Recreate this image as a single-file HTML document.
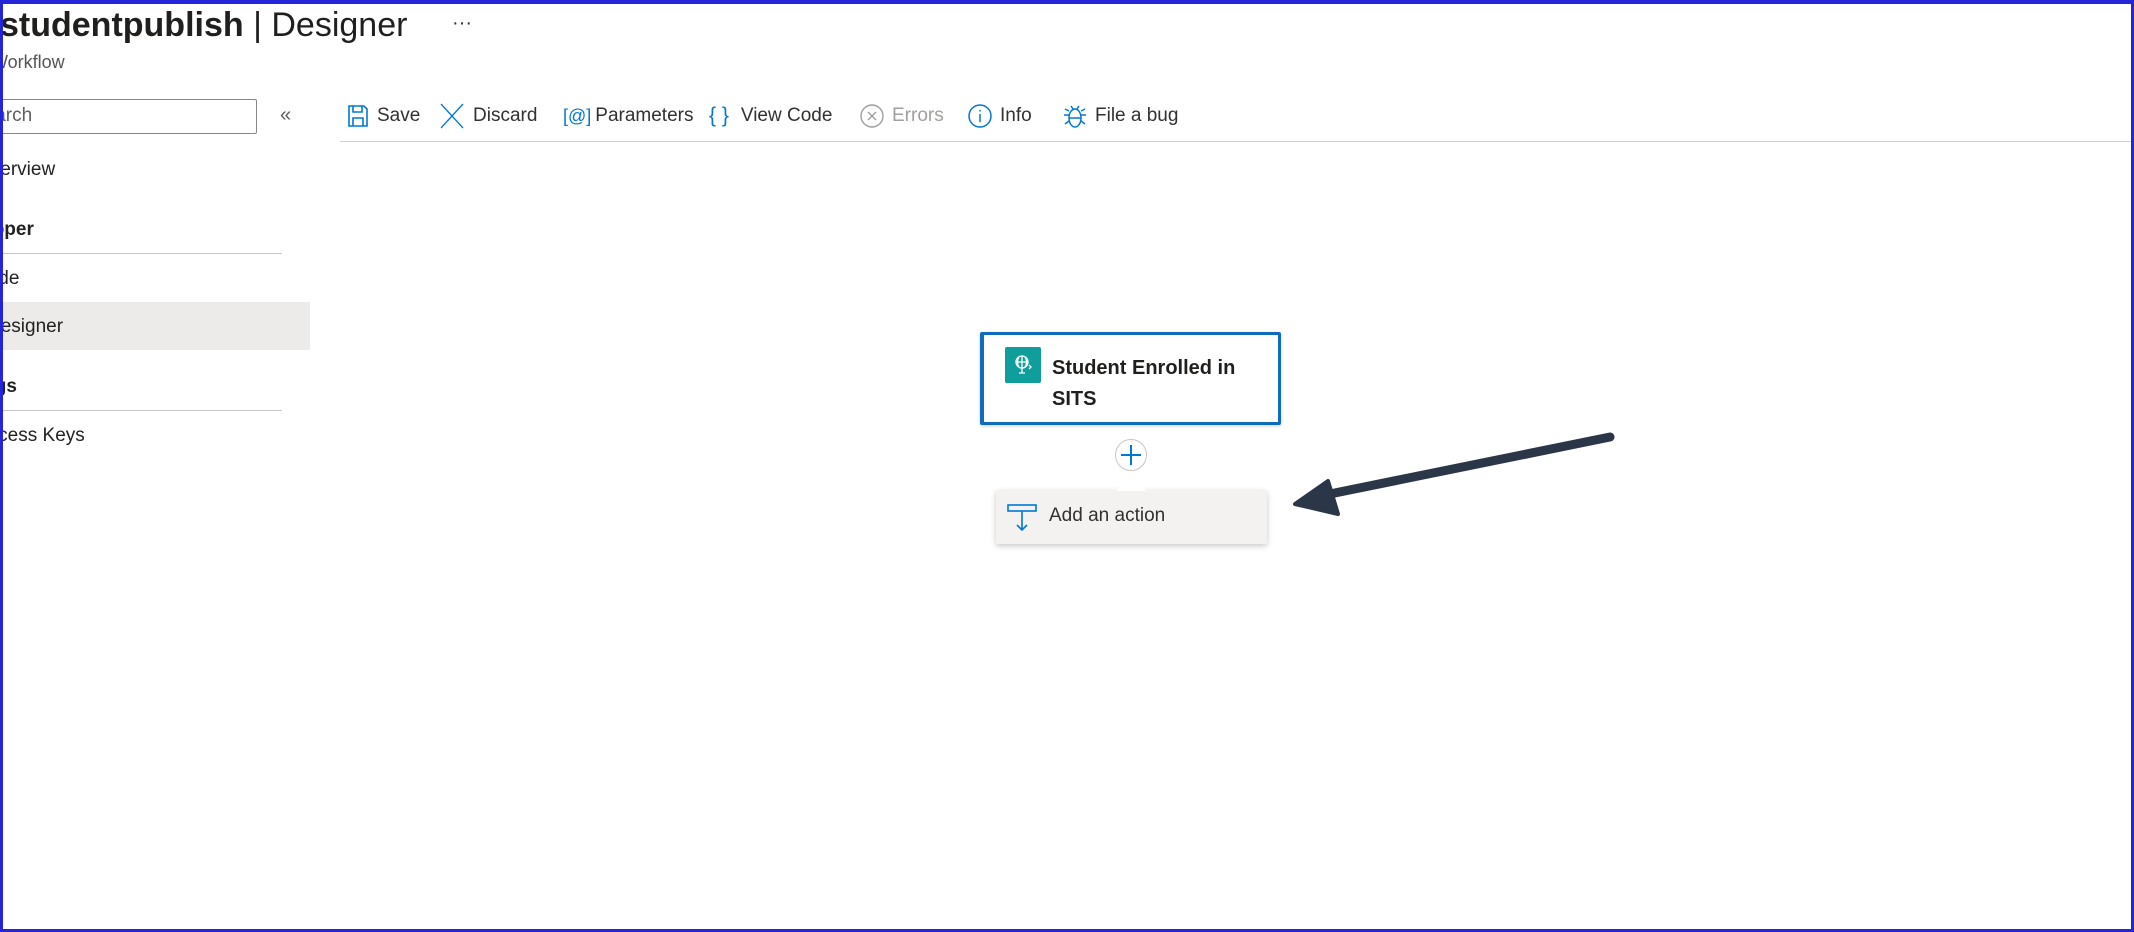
<!DOCTYPE html>
<html><head><meta charset="utf-8"><style>
*{margin:0;padding:0;box-sizing:border-box}
html,body{width:2134px;height:932px;overflow:hidden;background:#fff;font-family:"Liberation Sans",sans-serif;color:#222}
.frame{position:absolute;left:0;top:0;width:2134px;height:932px;border:3px solid #2424d8;border-top-width:4px;pointer-events:none;z-index:10}
.abs{position:absolute;white-space:nowrap}
.tb{position:absolute;top:104px;font-size:19px;color:#323130;display:flex;align-items:center;height:24px}
.tb svg{margin-right:8px}
</style></head><body>
<div class="frame"></div>
<div class="abs" style="left:0;top:6px;font-size:34px;color:#201f1e"><b>studentpublish</b> | Designer</div>
<div class="abs" style="left:452px;top:12px;font-size:20px;color:#333">···</div>
<div class="abs" style="left:-9px;top:52px;font-size:18px;color:#555">Workflow</div>

<div class="abs" style="left:-10px;top:99px;width:267px;height:35px;border:1px solid #8a8886;border-radius:2px"></div>
<div class="abs" style="left:-28px;top:105px;font-size:19px;color:#605e5c">Search</div>
<div class="abs" style="left:280px;top:104px;font-size:20px;color:#605e5c">«</div>

<div class="abs" style="left:-24px;top:159px;font-size:19px">Overview</div>
<div class="abs" style="left:-58px;top:219px;font-size:19px;font-weight:bold">Developer</div>
<div class="abs" style="left:0;top:253px;width:282px;height:1px;background:#c8c6c4"></div>
<div class="abs" style="left:-26px;top:268px;font-size:19px">Code</div>
<div class="abs" style="left:0;top:302px;width:310px;height:48px;background:#edebe9"></div>
<div class="abs" style="left:-13px;top:316px;font-size:19px">Designer</div>
<div class="abs" style="left:-58px;top:376px;font-size:19px;font-weight:bold">Settings</div>
<div class="abs" style="left:0;top:410px;width:282px;height:1px;background:#c8c6c4"></div>
<div class="abs" style="left:-24px;top:425px;font-size:19px">Access Keys</div>

<div class="tb" style="left:347px"><svg width="22" height="24" viewBox="0 0 22 24" fill="none" stroke="#0078d4" stroke-width="1.6"><path d="M2 2h15l3 3v17H2z"/><path d="M6 2v6h9V2"/><path d="M6 22v-8h10v8"/></svg>Save</div>
<div class="tb" style="left:439px"><svg width="26" height="26" viewBox="0 0 26 26" stroke="#0078d4" stroke-width="1.3"><path d="M2 1l22 24M24 1L2 25"/></svg>Discard</div>
<div class="tb" style="left:563px"><span style="color:#0078d4;font-size:18px;margin-right:4px">[@]</span>Parameters</div>
<div class="tb" style="left:709px"><span style="color:#0078d4;font-size:21px;margin-right:12px">{ }</span>View Code</div>
<div class="tb" style="left:860px;color:#a19f9d"><svg width="24" height="24" viewBox="0 0 24 24" fill="none" stroke="#a19f9d" stroke-width="1.4"><circle cx="12" cy="12" r="11"/><path d="M8 8l8 8M16 8l-8 8"/></svg>Errors</div>
<div class="tb" style="left:968px"><svg width="24" height="24" viewBox="0 0 24 24" fill="none" stroke="#0078d4" stroke-width="1.5"><circle cx="12" cy="12" r="11"/><path d="M12 10v8M12 6v1.5"/></svg>Info</div>
<div class="tb" style="left:1063px"><svg width="24" height="26" viewBox="0 0 24 26" fill="none" stroke="#0078d4" stroke-width="1.5"><ellipse cx="12" cy="15" rx="6" ry="9"/><path d="M8 3l2 3M16 3l-2 3M6 12H1M18 12h5M6 18l-4 3M18 18l4 3M6 8L2 6M18 8l4-2M6 15h12"/></svg>File a bug</div>
<div class="abs" style="left:340px;top:141px;width:1794px;height:1px;background:#d2d0ce"></div>

<div class="abs" style="left:980px;top:332px;width:301px;height:93px;border:3px solid #0f6cbd;border-left-width:4px;border-radius:2px;box-shadow:0 1px 3px rgba(0,0,0,.2)"></div>
<div class="abs" style="left:1005px;top:347px;width:36px;height:36px;background:#0f9e9b;border-radius:2px"><svg width="36" height="36" viewBox="0 0 36 36" fill="none" stroke="#fff" stroke-width="1.3"><circle cx="17" cy="15" r="6"/><path d="M11 15h12M17 9v12M14 10c-2 3-2 7 0 10M20 10c2 3 2 7 0 10M17 21v5M14 26h6M24 18l2 2-2 2"/></svg></div>
<div class="abs" style="left:1052px;top:353px;font-size:20px;font-weight:bold;line-height:31px;color:#201f1e">Student Enrolled in<br>SITS</div>

<div class="abs" style="left:996px;top:490px;width:271px;height:54px;background:#f3f2f1;box-shadow:0 2px 6px rgba(0,0,0,.22);border-radius:2px"></div>
<div class="abs" style="left:1116px;top:474px;width:0;height:0;border-left:15px solid transparent;border-right:15px solid transparent;border-bottom:17px solid #fff"></div>
<div class="abs" style="left:1115px;top:439px;width:32px;height:32px;border:1px solid #c8c6c4;border-radius:50%;background:#fff"><svg width="30" height="30" viewBox="0 0 30 30" stroke="#0078d4" stroke-width="2"><path d="M15 5v20M5 15h20"/></svg></div>
<div class="abs" style="left:1006px;top:503px"><svg width="34" height="30" viewBox="0 0 34 30" fill="none" stroke="#0078d4" stroke-width="1.6"><rect x="2" y="2" width="28" height="6"/><path d="M16 8v19M11 22l5 5 5-5"/></svg></div>
<div class="abs" style="left:1049px;top:505px;font-size:19px;color:#323130">Add an action</div>

<svg class="abs" style="left:0;top:0" width="2134" height="932"><path d="M1610 437L1320 496" stroke="#2b3648" stroke-width="9" stroke-linecap="round"/><path d="M1295 504L1328 481L1338 514Z" fill="#2b3648" stroke="#2b3648" stroke-width="4" stroke-linejoin="round"/></svg>
</body></html>
